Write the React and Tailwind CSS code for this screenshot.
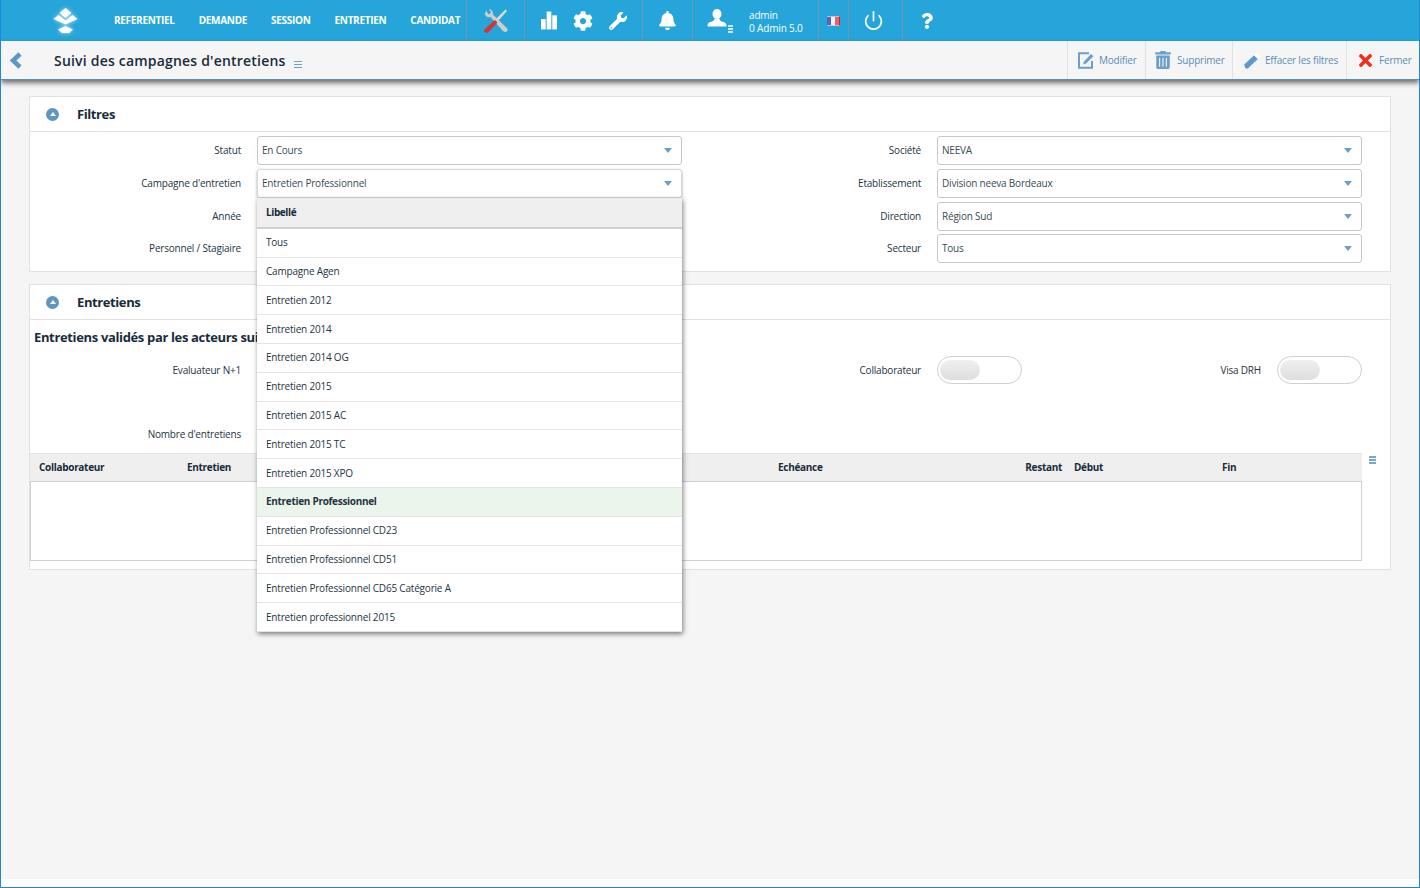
import { Power } from 'lucide-react'
import { FaBell, FaCog, FaQuestion, FaTimes, FaTrashAlt, FaWrench } from 'react-icons/fa'

const NAV = ['REFERENTIEL', 'DEMANDE', 'SESSION', 'ENTRETIEN', 'CANDIDAT']

const CAMPAGNES = [
  'Tous',
  'Campagne Agen',
  'Entretien 2012',
  'Entretien 2014',
  'Entretien 2014 OG',
  'Entretien 2015',
  'Entretien 2015 AC',
  'Entretien 2015 TC',
  'Entretien 2015 XPO',
  'Entretien Professionnel',
  'Entretien Professionnel CD23',
  'Entretien Professionnel CD51',
  'Entretien Professionnel CD65 Catégorie A',
  'Entretien professionnel 2015',
]

const Logo = () => (
  <svg width="40" height="40" viewBox="0 0 40 40" className="drop-shadow-[0_0_2px_rgba(255,255,255,0.7)]">
    <path d="M20.500 7 L26.500 12 L20.500 17 L14.500 12 Z" fill="#fff" />
    <path d="M8.500 18 L13.500 14 L20.500 19.500 L27.500 14 L32.500 18 L20.500 23.500 Z" fill="#fff" />
    <path d="M13 28.500 L20.500 25 L28 28.500 L24 32 L17 32 Z" fill="#fff" />
  </svg>
)

const ToolsIcon = () => (
  <svg width="26" height="26" viewBox="0 0 26 26">
    <path d="M4 2 C1.500 4 1.500 7 3.500 8.500 C5 9.500 6.500 9.300 7.500 9 L20 23 C21.200 24.400 23.400 24.400 24.300 23 C25 21.800 24.600 20.700 23.500 19.700 L10 6.500 C10.300 4.500 9.500 2.500 7.500 1.500 L6 1.300 L8 4.500 L5.700 6.500 L3.500 3.500 Z" fill="#cfcfca" />
    <path d="M22.500 1.500 L24 3 L15.500 12.500 L13.500 10.500 Z" fill="#dcdcd6" />
    <path d="M12 12 L14.500 14.500 L5.500 24 C4 25.300 2 25 1.300 23.700 C0.800 22.500 1.200 21.500 2 20.700 Z" fill="#d9322f" />
  </svg>
)

const BarsIcon = () => (
  <svg width="16" height="19" viewBox="0 0 17 19" fill="#fff">
    <rect x="0" y="8" width="5" height="11" />
    <rect x="6" y="0" width="5" height="19" />
    <rect x="12" y="4" width="5" height="15" />
  </svg>
)

const UserIcon = () => (
  <svg width="20" height="18" viewBox="0 0 20 18" fill="#fff">
    <ellipse cx="10" cy="5" rx="4.500" ry="5" />
    <path d="M7.500 9.500 C7.500 11.500 6 12.300 3.500 13 C1.500 13.600 0.500 14.500 0.500 17.500 L19.500 17.500 C19.500 14.500 18.500 13.600 16.500 13 C14 12.300 12.500 11.500 12.500 9.500 Z" />
  </svg>
)

const BackIcon = () => (
  <svg width="14" height="17" viewBox="0 0 14 17">
    <path d="M11 2 L4 8.500 L11 15" fill="none" stroke="#5b97c7" strokeWidth="4.500" />
  </svg>
)

const MenuLines = ({ className, color = '#6f9fc9', width = 8, thick = 1, space = 2 }) => (
  <div className={`flex flex-col ${className}`} style={{ width, gap: space }}>
    <div style={{ background: color, height: thick }} />
    <div style={{ background: color, height: thick }} />
    <div style={{ background: color, height: thick }} />
  </div>
)

const Flag = () => (
  <div className="flex h-[10px] w-[13px] overflow-hidden rounded-[1px] border-y border-r border-y-[#b9c4e0] border-r-[#d22]">
    <div className="flex-1 bg-[#5a63b5]" />
    <div className="flex-1 bg-[#f2f2f7]" />
    <div className="flex-1 bg-[#ef6060]" />
  </div>
)

const EditIcon = () => (
  <svg width="16" height="17" viewBox="0 0 16 17">
    <path d="M14 9 V15.800 H1 V1.200 H11" fill="none" stroke="#6b9fcb" strokeWidth="2" />
    <path d="M5 12.500 L6 9.500 L13 2 L15.500 4.300 L8 11.500 Z" fill="#6b9fcb" />
  </svg>
)

const EraserIcon = () => (
  <svg width="18" height="17" viewBox="0 0 16 16">
    <path d="M0.500 12 L10 3 L13.500 6.500 L4 15.500 L2 15.500 Z" fill="#5b9ad0" />
    <path d="M10 3 L12.500 0.500 L15.800 3.800 L13.500 6.500 Z" fill="#ffffff" />
  </svg>
)

const ToolbarButton = ({ icon, label, width, gap, pad = 10 }) => (
  <div className="flex h-full items-center border-l border-[#e2e2e2]" style={{ width, gap, paddingLeft: pad }}>
    {icon}
    <span className="mt-[1px] text-[10px] tracking-[-0.2px] text-[#5b8db5]">{label}</span>
  </div>
)

const CollapseIcon = () => (
  <div className="flex h-[13px] w-[13px] items-center justify-center rounded-full bg-[#5f95c3]">
    <div className="h-0 w-0 border-x-[3.5px] border-b-[4px] border-x-transparent border-b-white" />
  </div>
)

const Panel = ({ title, children, bodyClass }) => (
  <section className="border border-[#e2e0e0] bg-white">
    <header className="flex h-[35px] items-center gap-[18px] border-b border-[#e2e0e0] pl-[16px]">
      <CollapseIcon />
      <h2 className="mt-[1px] text-[13px] font-bold tracking-[-0.4px] text-[#182c3a]">{title}</h2>
    </header>
    <div className={bodyClass}>{children}</div>
  </section>
)

const Select = ({ value, open }) => (
  <div className={`flex h-[29px] w-[425px] items-center justify-between rounded-[3px] border pl-[4px] pr-[9px] ${open ? 'border-[#d8d8d8] shadow-[0_1px_3px_rgba(0,0,0,0.35)]' : 'border-[#c8c8c8]'}`}>
    <span className="text-[10px] tracking-[-0.2px] text-[#3b4a54]">{value}</span>
    <div className="h-0 w-0 border-x-[4px] border-t-[5px] border-x-transparent border-t-[#6f9fc9]" />
  </div>
)

const Field = ({ label, labelWidth, children }) => (
  <div className="flex items-center gap-[16px]">
    <label className="text-right text-[10px] tracking-[-0.2px] text-[#25343f]" style={{ width: labelWidth }}>{label}</label>
    {children}
  </div>
)

const Toggle = () => (
  <div className="flex h-[28px] w-[85px] items-center rounded-full border border-[#cfcfcf] bg-white pl-[2px]">
    <div className="h-[20px] w-[40px] rounded-full bg-gradient-to-b from-[#efefef] to-[#dedede]" />
  </div>
)

const CampagneDropdown = () => (
  <div className="absolute left-0 top-[29px] z-20 w-[425px] bg-white shadow-[1px_2px_5px_rgba(0,0,0,0.5)]">
    <div className="flex h-[31px] items-center border-b-2 border-[#cfcfcf] bg-[#efefef] pl-[9px] text-[10px] font-bold tracking-[-0.4px] text-[#182c3a]">
      Libellé
    </div>
    {CAMPAGNES.map((campagne) => {
      const selected = campagne === 'Entretien Professionnel'
      return (
        <div
          key={campagne}
          className={`flex h-[28.8px] items-center border-b border-[#e4e4e4] pl-[9px] text-[10px] text-[#25343f] ${selected ? 'bg-[#ecf5ec] font-bold tracking-[-0.3px]' : 'tracking-[-0.2px]'}`}
        >
          {campagne}
        </div>
      )
    })}
  </div>
)

export default function App() {
  return (
    <div className="flex h-[888px] w-[1420px] flex-col overflow-hidden border-x border-b border-[#1e88d8] bg-white font-['Open_Sans',sans-serif]">
      {/* Top bar */}
      <nav className="flex h-[41px] shrink-0 items-center bg-[#25a5da] text-white">
        <div className="flex h-full w-[466px] items-center border-r border-[#6f98b0]">
          <div className="ml-[44px] w-[69px]"><Logo /></div>
          <div className="flex gap-[24px] text-[10px] font-bold tracking-[-0.3px]">
            {NAV.map((item) => <span key={item}>{item}</span>)}
          </div>
        </div>
        <div className="flex h-full w-[58px] items-center justify-center border-r border-[#6f98b0]"><ToolsIcon /></div>
        <div className="flex h-full w-[118px] items-center gap-[16px] border-r border-[#6f98b0] pl-[16px]">
          <BarsIcon />
          <FaCog className="text-[20px]" />
          <FaWrench className="text-[18px]" />
        </div>
        <div className="flex h-full w-[50px] items-center justify-center border-r border-[#6f98b0]"><FaBell className="text-[19px]" /></div>
        <div className="flex h-full w-[126px] items-center border-r border-[#6f98b0] pl-[14px]">
          <div className="mt-[-5px]"><UserIcon /></div>
          <MenuLines className="ml-[1px] mt-[16px]" color="#cfe6f2" width={5} thick={2} space={1} />
          <div className="ml-[16px] mt-[2px] text-[10px] leading-[13px] tracking-[-0.15px]">
            <div>admin</div>
            <div>0 Admin 5.0</div>
          </div>
        </div>
        <div className="flex h-full w-[30px] items-center justify-center border-r border-[#6f98b0]"><Flag /></div>
        <div className="flex h-full w-[54px] items-center justify-center border-r border-[#6f98b0] pr-[4px]"><Power size={21} strokeWidth={2} /></div>
        <div className="flex h-full w-[48px] items-center justify-center"><FaQuestion className="text-[16px]" /></div>
      </nav>

      {/* Title bar */}
      <div className="z-10 flex h-[39px] shrink-0 items-center justify-between border-b border-[#5b8db5] bg-[#f5f5f5] shadow-[0_3px_5px_rgba(0,0,0,0.55)]">
        <div className="flex items-center">
          <div className="ml-[8px]"><BackIcon /></div>
          <h1 className="ml-[31px] text-[14px] font-semibold tracking-[0.2px] text-[#182c3a]">Suivi des campagnes d'entretiens</h1>
          <MenuLines className="ml-[8px] mt-[8px]" />
        </div>
        <div className="flex h-full">
          <ToolbarButton icon={<EditIcon />} label="Modifier" width={78} gap={5} />
          <ToolbarButton icon={<FaTrashAlt className="text-[18px] text-[#6b9fcb]" />} label="Supprimer" width={87} gap={5} pad={8} />
          <ToolbarButton icon={<EraserIcon />} label="Effacer les filtres" width={114} gap={4} />
          <ToolbarButton icon={<FaTimes className="text-[19px] text-[#f0301c]" />} label="Fermer" width={73} gap={4} pad={9} />
        </div>
      </div>

      {/* Content */}
      <main className="flex h-[799px] shrink-0 flex-col gap-[12px] bg-[#f5f5f5] pl-[28px] pt-[16px]">
        <div className="w-[1362px]">
          <Panel title="Filtres" bodyClass="grid grid-cols-[652px_680px] gap-y-[3.75px] pb-[8px] pt-[4px]">
            <Field label="Statut" labelWidth={211}><Select value="En Cours" /></Field>
            <Field label="Société" labelWidth={239}><Select value="NEEVA" /></Field>
            <Field label="Campagne d'entretien" labelWidth={211}>
              <div className="relative">
                <Select value="Entretien Professionnel" open />
                <CampagneDropdown />
              </div>
            </Field>
            <Field label="Etablissement" labelWidth={239}><Select value="Division neeva Bordeaux" /></Field>
            <Field label="Année" labelWidth={211}><Select value="" /></Field>
            <Field label="Direction" labelWidth={239}><Select value="Région Sud" /></Field>
            <Field label="Personnel / Stagiaire" labelWidth={211}><Select value="" /></Field>
            <Field label="Secteur" labelWidth={239}><Select value="Tous" /></Field>
          </Panel>
        </div>

        <div className="relative w-[1362px]">
          <Panel title="Entretiens" bodyClass="pb-[8px]">
            <h3 className="pl-[4px] pt-[8px] text-[13px] font-bold leading-[18px] tracking-[-0.35px] text-[#182c3a]">
              Entretiens validés par les acteurs suivants
            </h3>
            <div className="mt-[10px] grid h-[28px] grid-cols-[652px_340px_340px] items-center">
              <Field label="Evaluateur N+1" labelWidth={211}><Toggle /></Field>
              <Field label="Collaborateur" labelWidth={239}><Toggle /></Field>
              <Field label="Visa DRH" labelWidth={239}><Toggle /></Field>
            </div>
            <div className="flex h-[60px] items-end">
              <div className="w-[211px] pb-[3px] text-right text-[10px] leading-[14px] tracking-[-0.2px] text-[#25343f]">Nombre d'entretiens</div>
            </div>
            <div className="mt-[9px] w-[1332px]">
              <div className="flex h-[29px] items-center border-y border-t-[#e6e6e6] border-b-[#cfcfcf] bg-[#efefef] text-[10px] font-bold tracking-[-0.3px] text-[#182c3a]">
                <div className="w-[157px] pl-[9px]">Collaborateur</div>
                <div className="w-[591px]">Entretien</div>
                <div className="w-[222px]">Echéance</div>
                <div className="w-[62px] text-right">Restant</div>
                <div className="ml-[12px] w-[148px]">Début</div>
                <div>Fin</div>
              </div>
              <div className="h-[79px] border-x border-b border-[#cfcfcf] bg-white" />
            </div>
          </Panel>
          <MenuLines className="absolute left-[1340px] top-[172px]" color="#7aa7cf" width={7} thick={2} space={1} />
        </div>
      </main>
      <div className="flex-1 bg-white" />
    </div>
  )
}
